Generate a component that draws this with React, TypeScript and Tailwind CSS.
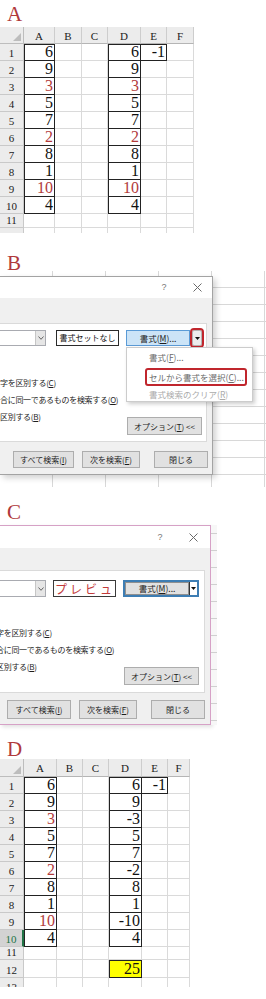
import clsx from 'clsx';

const JP = "font-['Noto_Sans_CJK_JP',sans-serif]";
const SERIF = "font-['Liberation_Serif',serif]";

type Cell = { v: string; red?: boolean; yellow?: boolean; top?: boolean; left?: boolean };
type Row = { n: string; h: string; sel?: boolean; cells: (Cell | null)[] };

const COLS = ['A', 'B', 'C', 'D', 'E', 'F'];
const A_VALUES = ['6', '9', '3', '5', '7', '2', '8', '1', '10', '4'];
const RED_ROWS = [2, 5, 8];
const D_VALUES = ['6', '9', '-3', '5', '7', '-2', '8', '1', '-10', '4'];

function dataRows(dValues: string[], dRed: boolean): Row[] {
  return A_VALUES.map((v, i) => {
    const red = RED_ROWS.includes(i);
    return {
      n: String(i + 1),
      h: 'h-[17px]',
      cells: [
        { v, red, top: i === 0, left: true },
        null,
        null,
        { v: dValues[i], red: dRed && red, top: i === 0, left: true },
        i === 0 ? { v: '-1', top: true } : null,
        null,
      ],
    };
  });
}

const emptyRow = (n: string, h: string): Row => ({ n, h, cells: [null, null, null, null, null, null] });

const SHEET_A: Row[] = [...dataRows(A_VALUES, true), emptyRow('11', 'h-[14px]'), emptyRow('12', 'h-[17px]')];

const SHEET_D: Row[] = [
  ...dataRows(D_VALUES, false).map((r) => (r.n === '10' ? { ...r, sel: true } : r)),
  emptyRow('11', 'h-[13px]'),
  {
    n: '12',
    h: 'h-[18px]',
    cells: [null, null, null, { v: '25', yellow: true, top: true, left: true }, null, null],
  },
  emptyRow('13', 'h-[17px]'),
];

function DataCell({ w, c }: { w: string; c: Cell | null }) {
  if (!c) return <div className={clsx(w, 'h-full shrink-0 border-r border-b border-[#dadada]')} />;
  const edge =
    c.top && c.left
      ? 'shadow-[inset_1px_1px_0_#222]'
      : c.top
        ? 'shadow-[inset_0_1px_0_#222]'
        : c.left
          ? 'shadow-[inset_1px_0_0_#222]'
          : '';
  return (
    <div
      className={clsx(
        w,
        'h-full shrink-0 flex items-end justify-end pr-[1px] border-r border-b border-[#222] text-[16px] leading-[16px]',
        edge,
        c.yellow && 'bg-[#ffff00]',
        c.red ? 'text-[#b23b3b]' : 'text-[#111]',
      )}
    >
      {c.v}
    </div>
  );
}

function Sheet({ widths, headH, rows, className }: { widths: string[]; headH: string; rows: Row[]; className: string }) {
  return (
    <div className={clsx('overflow-hidden', SERIF, className)}>
      <div className={clsx('flex', headH)}>
        <div className={clsx(widths[0], 'shrink-0 flex items-end justify-end p-[2px] bg-[#ececec] border-r border-b border-[#bdbdbd]')}>
          <svg width="8" height="8" viewBox="0 0 8 8">
            <polygon points="8,0 8,8 0,8" fill="#bdbdbd" />
          </svg>
        </div>
        {COLS.map((c, i) => (
          <div
            key={c}
            className={clsx(
              widths[i + 1],
              'shrink-0 flex items-center justify-center pt-[2px] bg-[#ececec] border-r border-b border-[#cdcdcd] border-b-[#b5b5b5] text-[11px] leading-[11px] text-[#222]',
            )}
          >
            {c}
          </div>
        ))}
      </div>
      {rows.map((r) => (
        <div key={r.n} className={clsx('flex', r.h)}>
          <div
            className={clsx(
              widths[0],
              'shrink-0 flex items-end justify-center pb-[1px] text-[11px] leading-[12px]',
              r.sel
                ? 'bg-[#d3d3d3] text-[#217346] border-r-2 border-b border-r-[#217346] border-b-[#c9c9c9]'
                : 'bg-[#ececec] text-[#222] border-r border-b border-[#c9c9c9]',
            )}
          >
            {r.n}
          </div>
          {r.cells.map((c, i) => (
            <DataCell key={i} w={widths[i + 1]} c={c} />
          ))}
        </div>
      ))}
    </div>
  );
}

function Label({ ch, className }: { ch: string; className: string }) {
  return <div className={clsx('pl-[7px] text-[21px] leading-[21px] text-[#b0393b]', SERIF, className)}>{ch}</div>;
}

function CloseX() {
  return (
    <svg width="9" height="9" viewBox="0 0 9 9">
      <path d="M0.5 0.5L8.5 8.5M8.5 0.5L0.5 8.5" stroke="#6a6a6a" strokeWidth="1" />
    </svg>
  );
}

function Tri() {
  return (
    <svg width="5" height="3" viewBox="0 0 5 3">
      <polygon points="0,0 5,0 2.5,3" fill="#111" />
    </svg>
  );
}

function TitleBar({ className }: { className: string }) {
  return (
    <div className={clsx('flex items-center justify-end gap-[20px] bg-white', className)}>
      <span className="w-[10px] text-center text-[9px] leading-[9px] text-[#777] font-['Liberation_Sans',sans-serif]">?</span>
      <span className="w-[16px] flex justify-center">
        <CloseX />
      </span>
    </div>
  );
}

function Combo() {
  return (
    <div className="w-[46px] h-full flex justify-end bg-white border-y border-r border-[#a9abb1]">
      <div className="w-[10px] flex items-center justify-center bg-[#e6e6e6] border-l border-[#c6c6c6]">
        <svg width="6" height="4" viewBox="0 0 6 4">
          <path d="M0.5 0.5L3 3.3L5.5 0.5" stroke="#555" strokeWidth="0.9" fill="none" />
        </svg>
      </div>
    </div>
  );
}

const BTN = 'flex items-center justify-center bg-[#e1e1e1] border border-[#adadad] text-[8px] text-[#1e1e1e] whitespace-nowrap';

function Options({ shift, top, optW, optMr }: { shift: string; top: string; optW: string; optMr: string }) {
  return (
    <div className={clsx('text-[8px] leading-[17px] tracking-[-0.3px] text-[#1e1e1e]', top)}>
      <div className={clsx('h-[17px] whitespace-nowrap', shift)}>
        字を区別する(<u>C</u>)
      </div>
      <div className={clsx('h-[17px] whitespace-nowrap', shift)}>
        合に同一であるものを検索する(<u>O</u>)
      </div>
      <div className="flex justify-between items-start">
        <div className={clsx('h-[17px] whitespace-nowrap', shift)}>
          区別する(<u>B</u>)
        </div>
        <div className={clsx(BTN, 'mt-[9px] h-[18px] tracking-normal', optW, optMr)}>
          オプション(<u>T</u>)&nbsp;&lt;&lt;
        </div>
      </div>
    </div>
  );
}

function DialogB() {
  return (
    <div className={clsx('relative h-[216px] pt-[5px] bg-[repeating-linear-gradient(to_right,transparent_0_52px,#d8d8d8_52px_53px),repeating-linear-gradient(to_bottom,transparent_0_16px,#d8d8d8_16px_17px)]', JP)}>
      <div className="w-[213px] h-[199px] flex flex-col bg-white border-t border-r border-b border-[#a3a3a3] shadow-[3px_3px_6px_rgba(0,0,0,0.18)]">
        <TitleBar className="h-[21px] pr-[7px]" />
        <div className="flex-1 flex flex-col bg-[#f0f0f0] pt-[25px]">
          <div className="h-[119px] mr-[5px] flex flex-col bg-white border-y border-r border-[#dadada]">
            <div className="mt-[6px] h-[16px] flex">
              <Combo />
              <div className="ml-[10px] w-[63px] flex items-center justify-center border border-[#2b2b2b] text-[8px] text-[#111] whitespace-nowrap">
                書式セットなし
              </div>
              <div className="ml-[7px] w-[64px] flex items-center justify-center bg-[#cce4f7] border border-[#5b9bd6] text-[8.5px] text-[#1e1e1e]">
                書式(<u>M</u>)...
              </div>
              <div className="ml-[2px] w-[10px] flex items-center justify-center bg-[#ececec] border border-[#b3b3b3] outline-2 outline-offset-0 outline-[#c0262d] rounded-[2px]">
                <Tri />
              </div>
            </div>
            <Options shift="" top="mt-[28px]" optW="w-[75px]" optMr="mr-[4px]" />
          </div>
          <div className="mt-[9px] h-[17px] flex pl-[13px]">
            <div className={clsx(BTN, 'w-[61px]')}>
              すべて検索(<u>I</u>)
            </div>
            <div className={clsx(BTN, 'ml-[8px] w-[58px]')}>
              次を検索(<u>F</u>)
            </div>
            <div className={clsx(BTN, 'ml-[14px] w-[54px]')}>閉じる</div>
          </div>
        </div>
      </div>
      <div className="absolute left-[126px] top-[76px] w-[127px] h-[55px] bg-white border border-[#cccccc] shadow-[2px_2px_4px_rgba(0,0,0,0.2)] text-[8.5px] leading-[14px] whitespace-nowrap">
        <div className="h-[18px] flex items-center pl-[22px] text-[#6b6b6b]">
          書式(<u>F</u>)...
        </div>
        <div className="mt-[2px] h-[18px] ml-[18px] mr-[5px] flex items-center pl-[2px] border-2 border-[#c0262d] rounded-[3px] text-[#6b6b6b]">
          セルから書式を選択(<u>C</u>)...
        </div>
        <div className="h-[16px] flex items-center pl-[22px] text-[#ababab]">
          書式検索のクリア(<u>R</u>)
        </div>
      </div>
    </div>
  );
}

function DialogC() {
  return (
    <div className={clsx('flex h-[200px]', JP)}>
      <div className="w-[211px] flex flex-col bg-white border-t border-r border-b border-[#d6a1c6] shadow-[2px_2px_4px_rgba(0,0,0,0.12)]">
        <TitleBar className="h-[22px] pr-[9px]" />
        <div className="flex-1 flex flex-col bg-[#f0f0f0] pt-[22px]">
          <div className="h-[123px] mr-[5px] flex flex-col bg-white border-y border-r border-[#dadada]">
            <div className="mt-[9px] h-[17px] flex">
              <Combo />
              <div className="ml-[7px] w-[63px] overflow-hidden whitespace-nowrap pl-[1px] border border-[#3a3a3a] text-[12px] leading-[15px] tracking-[3px] text-[#c23a3a]">
                プレビュー
              </div>
              <div className="ml-[7px] w-[76px] flex bg-white border-2 border-[#3d7db3]">
                <div className="flex-1 flex items-center justify-center bg-[#e1e1e1] border border-[#8f8f8f] text-[8.5px] text-[#1e1e1e]">
                  書式(<u>M</u>)...
                </div>
                <div className="w-[8px] flex items-center justify-center border-l border-[#333]">
                  <Tri />
                </div>
              </div>
            </div>
            <Options shift="ml-[-4px]" top="mt-[27px]" optW="w-[75px]" optMr="mr-[5px]" />
          </div>
          <div className="mt-[7px] h-[19px] flex pl-[7px]">
            <div className={clsx(BTN, 'w-[64px]')}>
              すべて検索(<u>I</u>)
            </div>
            <div className={clsx(BTN, 'ml-[8px] w-[58px]')}>
              次を検索(<u>F</u>)
            </div>
            <div className={clsx(BTN, 'ml-[14px] w-[54px]')}>閉じる</div>
          </div>
        </div>
      </div>
      <div className="w-[6px] bg-[#f7f7f7] bg-[repeating-linear-gradient(to_bottom,transparent_0_8px,#d0d0d0_8px_9px,transparent_9px_17px)]" />
    </div>
  );
}

export default function App() {
  return (
    <div className="w-[266px] h-[999px] overflow-hidden bg-white">
      <Label ch="A" className="h-[27px] pt-[4px]" />
      <Sheet
        widths={['w-[24px]', 'w-[31px]', 'w-[27px]', 'w-[26px]', 'w-[33px]', 'w-[26px]', 'w-[27px]']}
        headH="h-[17px]"
        rows={SHEET_A}
        className="w-[194px] h-[206px]"
      />
      <Label ch="B" className="h-[38px] pt-[20px]" />
      <DialogB />
      <Label ch="C" className="h-[38px] pt-[15px]" />
      <DialogC />
      <Label ch="D" className="h-[34px] pt-[14px]" />
      <Sheet
        widths={['w-[24px]', 'w-[33px]', 'w-[26px]', 'w-[26px]', 'w-[33px]', 'w-[26px]', 'w-[22px]']}
        headH="h-[18px]"
        rows={SHEET_D}
        className="w-[190px] h-[228px]"
      />
    </div>
  );
}
